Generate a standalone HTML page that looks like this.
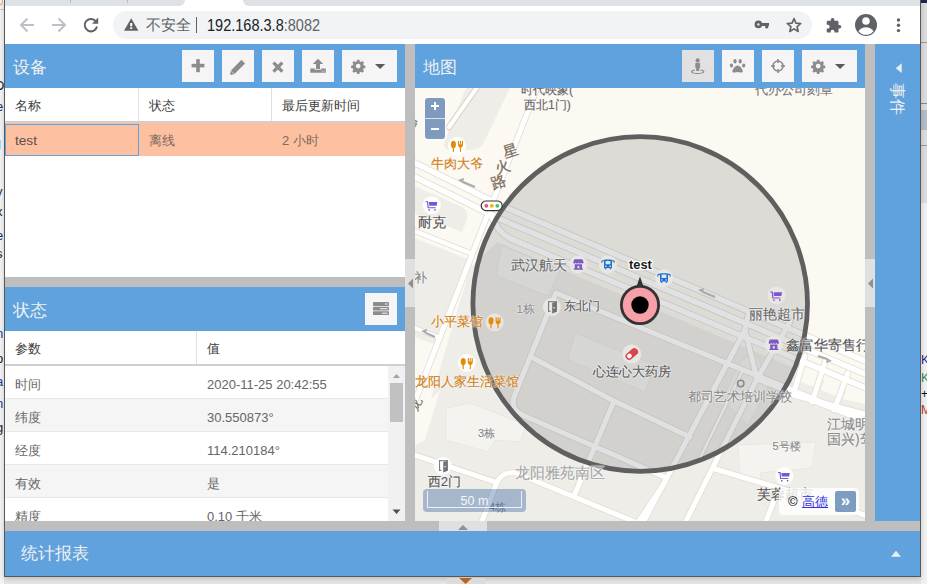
<!DOCTYPE html>
<html><head><meta charset="utf-8">
<style>
*{box-sizing:border-box;margin:0;padding:0}
html,body{width:927px;height:584px;overflow:hidden;background:#e9e9e9;font-family:"Liberation Sans",sans-serif;position:relative}
.a{position:absolute}
.hdr{position:absolute;background:#5fa2dd;height:44px;color:#f0f0f0;font-size:16px}
.hdr .t{position:absolute;left:8px;top:14.5px;line-height:18px;font-size:16.6px}
.btn{position:absolute;top:6px;width:32px;height:32px;background:#f5f5f5}
.btn.pressed{background:#e1e1e1}
.gh{position:absolute;height:35px;background:#fff;border-bottom:2px solid #cfcfcf;font-size:13px;color:#404040}
.gh div{position:absolute;top:0;height:33px;line-height:35.5px;padding-left:10px;border-right:1px solid #e1e1e1}
.row{position:absolute;height:33px;border-bottom:1px solid #e9e9e9;background:#fff;font-size:13px;color:#666}
.row div{position:absolute;top:1.5px;line-height:33px;padding-left:10px}
.alt{background:#f5f5f5}
</style></head><body>
<!-- desktop -->
<div class="a" style="left:0;top:0;width:927px;height:584px;background:#e6e6e6"></div>





<!-- window frame -->
<div class="a" style="left:0;top:0;width:4px;height:584px;background:#f3f3f3;overflow:hidden">
<div class="a" style="left:-4px;top:9px;width:8px;height:1px;background:#c8c8c8"></div>
<div class="a" style="left:-6px;top:-3px;width:9px;height:9px;border-radius:50%;border:1.5px solid #e0a050"></div>
<div class="a" style="left:-5px;top:79px;font-size:13px;line-height:13px;color:#111">D</div>
<div class="a" style="left:-4px;top:100px;font-size:13px;line-height:13px;color:#1a2a60">e</div>
<div class="a" style="left:-2px;top:138px;font-size:13px;line-height:13px;color:#222">l</div>
<div class="a" style="left:-4px;top:185px;font-size:13px;line-height:13px;color:#1a2a60">v</div>
<div class="a" style="left:-4px;top:205px;font-size:13px;line-height:13px;color:#222">x</div>
<div class="a" style="left:-4px;top:229px;font-size:13px;line-height:13px;color:#1a2a60">e</div>
<div class="a" style="left:-4px;top:247px;font-size:13px;line-height:13px;color:#222">s</div>
<div class="a" style="left:-4px;top:327px;font-size:13px;line-height:13px;color:#1a40a0">n</div>
<div class="a" style="left:-4px;top:352px;font-size:13px;line-height:13px;color:#222">o</div>
<div class="a" style="left:-4px;top:375px;font-size:13px;line-height:13px;color:#1a40a0">a</div>
<div class="a" style="left:-4px;top:397px;font-size:13px;line-height:13px;color:#1a40a0">n</div>
<div class="a" style="left:-4px;top:421px;font-size:13px;line-height:13px;color:#222">g</div>
</div>
<div class="a" style="left:921px;top:0;width:6px;height:584px;background:#f0f0f0;overflow:hidden">
<div class="a" style="left:0;top:0;width:6px;height:3px;background:#1b2a4a"></div>
<div class="a" style="left:0;top:3px;width:6px;height:200px;background:#dcdcdc"></div>
<div class="a" style="left:0;top:42px;width:6px;height:1px;background:#999"></div>
<div class="a" style="left:0;top:103px;width:6px;height:1px;background:#888"></div>
<div class="a" style="left:0;top:110px;width:6px;height:20px;background:#b4bcc8"></div>
<div class="a" style="left:0;top:145px;width:6px;height:1px;background:#999"></div>
<div class="a" style="left:0;top:354px;font-size:12px;line-height:12px;color:#1a2a90">K</div>
<div class="a" style="left:0;top:372px;font-size:12px;line-height:12px;color:#2a8a5a">K</div>
<div class="a" style="left:0;top:388px;font-size:12px;line-height:12px;color:#111">+</div>
<div class="a" style="left:0;top:404px;font-size:12px;line-height:12px;color:#c03030">M</div>

</div>
<div class="a" style="left:4px;top:0;width:917px;height:577px;background:#bebebe;border:1px solid #585858;border-top:none;box-shadow:0 2px 5px rgba(0,0,0,.18)"></div>
<!-- tab strip -->
<div class="a" style="left:5px;top:0;width:915px;height:7px;background:#fff"></div>
<div class="a" style="left:5px;top:0;width:180px;height:6px;background:#dee1e6;border-bottom-right-radius:6px"></div>
<div class="a" style="left:243px;top:0;width:677px;height:6px;background:#dee1e6;border-bottom-left-radius:6px"></div>
<div class="a" style="left:70px;top:0;width:1px;height:3px;background:#b9bcc1"></div>
<div class="a" style="left:127px;top:0;width:1px;height:3px;background:#b9bcc1"></div>
<!-- toolbar -->
<div class="a" style="left:5px;top:6px;width:915px;height:38px;background:#fff"></div>
<div class="a" style="left:113px;top:11px;width:699px;height:28px;border-radius:14px;background:#f1f3f4"></div>
<svg class="a" style="left:0;top:0" width="927" height="44" viewBox="0 0 927 44">
  <!-- back -->
  <path d="M34 25H21.5M27.5 18.5L21 25l6.5 6.5" fill="none" stroke="#bdc1c6" stroke-width="2"/>
  <!-- forward -->
  <path d="M52 25h12.5M58.5 18.5L65 25l-6.5 6.5" fill="none" stroke="#bdc1c6" stroke-width="2"/>
  <!-- reload -->
  <path d="M96.2 21.8A6.2 6.2 0 1 0 97 26.6" fill="none" stroke="#5f6368" stroke-width="2"/>
  <path d="M98.2 17.6v6.2H92z" fill="#5f6368"/>
  <!-- warning -->
  <path d="M131.2 18.3L138.4 30.8H124z" fill="#5f6368"/>
  <rect x="130.2" y="23" width="2" height="3.3" fill="#fff"/>
  <rect x="130.2" y="27.3" width="2" height="1.7" fill="#fff"/>
  <!-- separator -->
  <rect x="196" y="17" width="1" height="16" fill="#5f6368"/>
  <!-- key -->
  <circle cx="758.4" cy="24.4" r="2.5" fill="none" stroke="#5f6368" stroke-width="2.6"/>
  <path d="M760.5 23h8.5v2.9h-.8v2.4h-3v-2.4h-4.7z" fill="#5f6368"/>
  <!-- star -->
  <path d="M794 18.6l1.9 4.5 4.9.4-3.7 3.2 1.1 4.8-4.2-2.6-4.2 2.6 1.1-4.8-3.7-3.2 4.9-.4z" fill="none" stroke="#5f6368" stroke-width="1.6" stroke-linejoin="round"/>
  <!-- puzzle -->
  <path transform="translate(825.3 17.3) scale(.695)" d="M20.5 11H19V7c0-1.1-.9-2-2-2h-4V3.5C13 2.12 11.88 1 10.5 1S8 2.12 8 3.5V5H4c-1.1 0-1.99.9-1.99 2v3.8H3.5c1.49 0 2.7 1.21 2.7 2.7s-1.21 2.7-2.7 2.7H2V20c0 1.1.9 2 2 2h3.8v-1.5c0-1.49 1.21-2.7 2.7-2.7 1.490 0 2.7 1.21 2.7 2.7V22H17c1.1 0 2-.9 2-2v-4h1.5c1.38 0 2.5-1.12 2.5-2.5S21.88 11 20.5 11z" fill="#5f6368"/>
  <!-- avatar -->
  <circle cx="866" cy="25" r="11" fill="#5f6368"/>
  <circle cx="866" cy="21" r="3.8" fill="#fff"/>
  <path d="M858.5 31.2c1.6-2.6 4.6-4 7.5-4s5.9 1.4 7.5 4A9.5 9.5 0 0 1 858.5 31.2z" fill="#fff"/>
  <!-- dots -->
  <circle cx="898.5" cy="20" r="1.7" fill="#5f6368"/>
  <circle cx="898.5" cy="25.3" r="1.7" fill="#5f6368"/>
  <circle cx="898.5" cy="30.6" r="1.7" fill="#5f6368"/>
</svg>
<div class="a" style="left:146px;top:16px;font-size:15px;line-height:18px;color:#5f6368">不安全</div>
<div class="a" style="left:206.5px;top:16px;font-size:16.5px;line-height:18px;color:#202124;transform:scaleX(.88);transform-origin:0 0">192.168.3.8<span style="color:#5f6368">:8082</span></div>
<svg class="a" style="left:415px;top:88px" width="450" height="433" viewBox="415 88 450 433"><defs><clipPath id="mc"><rect x="415" y="88" width="450" height="433"/></clipPath></defs><g clip-path="url(#mc)">
<rect x="415" y="88" width="450" height="433" fill="#fcf9f2"/>
<g fill="#efede8"><path d="M415 186 L462 207 Q470 212 466 222 L462 232 L415 214Z"/><path d="M415 238 L470 260 L448 318 L436 345 L415 337Z"/><path d="M497 242 L865 398 L865 521 L415 521 L415 448 L430 402 L470 268Z"/><path d="M466 88 L510 88 L484 142 Q480 150 470 150 L452 150 Q440 150 446 138Z"/></g>
<g fill="#fcf9f2"><path d="M806 358 L824 366 L816 388 L798 381Z"/><path d="M829 368 L846 375 L838 397 L821 390Z"/><path d="M851 378 L865 384 L865 404 L843 399Z"/><path d="M415 415 L440 390 L425 440 L415 445Z"/></g>
<g fill="#f4f3ef" stroke="#e8e5df" stroke-width=".8"><path d="M446 408 L470 403 L527 425 L520 442 L495 440 L488 452 L446 440Z"/><path d="M738 445 L816 442 L812 468 L760 473 L762 484 L740 480Z"/><path d="M502 245 L560 270 L548 296 L496 276Z"/><path d="M575 333 L655 365 L645 392 L568 360Z"/><path d="M722 400 L738 366 Q746 352 758 358 L770 384 L748 425Z"/></g>
<g fill="none" stroke-linecap="round" stroke-linejoin="round">
<path d="M537 88L415 401" stroke="#e3ddd2" stroke-width="6.6"/><path d="M415 163L500 205L865 361" stroke="#e3ddd2" stroke-width="7.1"/><path d="M415 177L500 219L865 374" stroke="#e3ddd2" stroke-width="7.1"/><path d="M491 214Q497 233 512 239.4L865 387.7" stroke="#e3ddd2" stroke-width="7.1"/><path d="M415 231L470 253" stroke="#e3ddd2" stroke-width="6.1"/><path d="M556 293L865 420" stroke="#e3ddd2" stroke-width="6.6"/><path d="M556 293L514 397Q510 410 524 415.7L652 471.5L667 478" stroke="#e3ddd2" stroke-width="6.6"/><path d="M533 358L612 400L690 437" stroke="#e3ddd2" stroke-width="6.6"/><path d="M614 401L574 496" stroke="#e3ddd2" stroke-width="6.6"/><path d="M415 455L495 482" stroke="#e3ddd2" stroke-width="6.6"/><path d="M482 521L497 482Q503 471 516 473L640 524" stroke="#e3ddd2" stroke-width="6.6"/><path d="M665 482L639 521" stroke="#e3ddd2" stroke-width="6.6"/><path d="M745 330L644 521" stroke="#e3ddd2" stroke-width="6.6"/><path d="M757 379L686 521" stroke="#e3ddd2" stroke-width="6.6"/><path d="M742 372L700 458" stroke="#e3ddd2" stroke-width="4.1"/><path d="M745 330L757 379L865 421" stroke="#e3ddd2" stroke-width="6.6"/><path d="M757 379L790 322" stroke="#e3ddd2" stroke-width="6.6"/><path d="M805 356L793 395L865 414" stroke="#e3ddd2" stroke-width="6.6"/><path d="M825.5 361L812 402" stroke="#e3ddd2" stroke-width="6.6"/><path d="M848 373L834 410" stroke="#e3ddd2" stroke-width="6.6"/><path d="M715 469L779 488L865 515" stroke="#e3ddd2" stroke-width="6.6"/><path d="M766 521L777 493" stroke="#e3ddd2" stroke-width="6.6"/><path d="M415 328L440 338" stroke="#e3ddd2" stroke-width="5.6"/><path d="M745 330L748 315" stroke="#e3ddd2" stroke-width="6.6"/>
<path d="M537 88L415 401" stroke="#ffffff" stroke-width="5"/><path d="M415 163L500 205L865 361" stroke="#ffffff" stroke-width="5.5"/><path d="M415 177L500 219L865 374" stroke="#ffffff" stroke-width="5.5"/><path d="M491 214Q497 233 512 239.4L865 387.7" stroke="#ffffff" stroke-width="5.5"/><path d="M415 231L470 253" stroke="#ffffff" stroke-width="4.5"/><path d="M556 293L865 420" stroke="#ffffff" stroke-width="5"/><path d="M556 293L514 397Q510 410 524 415.7L652 471.5L667 478" stroke="#ffffff" stroke-width="5"/><path d="M533 358L612 400L690 437" stroke="#ffffff" stroke-width="5"/><path d="M614 401L574 496" stroke="#ffffff" stroke-width="5"/><path d="M415 455L495 482" stroke="#ffffff" stroke-width="5"/><path d="M482 521L497 482Q503 471 516 473L640 524" stroke="#ffffff" stroke-width="5"/><path d="M665 482L639 521" stroke="#ffffff" stroke-width="5"/><path d="M745 330L644 521" stroke="#ffffff" stroke-width="5"/><path d="M757 379L686 521" stroke="#ffffff" stroke-width="5"/><path d="M742 372L700 458" stroke="#ffffff" stroke-width="2.5"/><path d="M745 330L757 379L865 421" stroke="#ffffff" stroke-width="5"/><path d="M757 379L790 322" stroke="#ffffff" stroke-width="5"/><path d="M805 356L793 395L865 414" stroke="#ffffff" stroke-width="5"/><path d="M825.5 361L812 402" stroke="#ffffff" stroke-width="5"/><path d="M848 373L834 410" stroke="#ffffff" stroke-width="5"/><path d="M715 469L779 488L865 515" stroke="#ffffff" stroke-width="5"/><path d="M766 521L777 493" stroke="#ffffff" stroke-width="5"/><path d="M415 328L440 338" stroke="#ffffff" stroke-width="4"/><path d="M745 330L748 315" stroke="#ffffff" stroke-width="5"/>
<path d="M478 86L449 127" stroke="#ddd6ca" stroke-width="6.5" stroke-linecap="round" stroke-dasharray="5 3"/><path d="M478 86L449 127" stroke="#fff" stroke-width="4" stroke-linecap="round"/>
</g>
<circle cx="640.2" cy="304" r="167.3" fill="rgba(25,30,40,0.135)" stroke="#5f5f5f" stroke-width="4.8"/>
<!-- POI icons -->
<g id="pois">
  <!-- restaurant icons -->
  <g transform="translate(457 145.8)"><circle r="9" fill="#fff" fill-opacity=".85"/><g fill="#e38b06"><ellipse cx="-3.6" cy="-1.4" rx="2.5" ry="3.6"/><rect x="-4.2" y="1.5" width="1.2" height="4.6"/><rect x="1" y="-4.9" width="1.1" height="3.8"/><rect x="2.95" y="-4.9" width="1.1" height="3.8"/><rect x="4.9" y="-4.9" width="1.1" height="3.8"/><path d="M1-1.6h5c0 2.2-.9 3.3-2.5 3.5-1.6-.2-2.5-1.3-2.5-3.5z"/><rect x="2.95" y="1.5" width="1.1" height="4.6"/></g></g>
  <g transform="translate(494.6 322.3)"><circle r="9" fill="#e8e5e0"/><g fill="#e38b06"><ellipse cx="-3.6" cy="-1.4" rx="2.5" ry="3.6"/><rect x="-4.2" y="1.5" width="1.2" height="4.6"/><rect x="1" y="-4.9" width="1.1" height="3.8"/><rect x="2.95" y="-4.9" width="1.1" height="3.8"/><rect x="4.9" y="-4.9" width="1.1" height="3.8"/><path d="M1-1.6h5c0 2.2-.9 3.3-2.5 3.5-1.6-.2-2.5-1.3-2.5-3.5z"/><rect x="2.95" y="1.5" width="1.1" height="4.6"/></g></g>
  <g transform="translate(466.8 363)"><circle r="9" fill="#fff" fill-opacity=".85"/><g fill="#e38b06"><ellipse cx="-3.6" cy="-1.4" rx="2.5" ry="3.6"/><rect x="-4.2" y="1.5" width="1.2" height="4.6"/><rect x="1" y="-4.9" width="1.1" height="3.8"/><rect x="2.95" y="-4.9" width="1.1" height="3.8"/><rect x="4.9" y="-4.9" width="1.1" height="3.8"/><path d="M1-1.6h5c0 2.2-.9 3.3-2.5 3.5-1.6-.2-2.5-1.3-2.5-3.5z"/><rect x="2.95" y="1.5" width="1.1" height="4.6"/></g></g>
  <!-- cart icons -->
  <g transform="translate(431.8 205.2)"><circle r="9" fill="#fff" fill-opacity=".9"/><g fill="#7b55d3"><path d="M-6.3-4h2.6l.5 6h7.1v1.1h-8.1l-.6-6h-1.5z"/><path d="M-2.9-3.1h8.4l-.7 3.6h-7.4z"/><rect x="-3.3" y="4" width="1.5" height="1.5"/><rect x="2.5" y="4" width="1.5" height="1.5"/></g></g>
  <g transform="translate(776.5 295.4)"><circle r="9" fill="#e8e7e4"/><g fill="#7b55d3"><path d="M-6.3-4h2.6l.5 6h7.1v1.1h-8.1l-.6-6h-1.5z"/><path d="M-2.9-3.1h8.4l-.7 3.6h-7.4z"/><rect x="-3.3" y="4" width="1.5" height="1.5"/><rect x="2.5" y="4" width="1.5" height="1.5"/></g></g>
  <g transform="translate(784.3 476)"><circle r="9" fill="#fff" fill-opacity=".9"/><g fill="#7b55d3"><path d="M-6.3-4h2.6l.5 6h7.1v1.1h-8.1l-.6-6h-1.5z"/><path d="M-2.9-3.1h8.4l-.7 3.6h-7.4z"/><rect x="-3.3" y="4" width="1.5" height="1.5"/><rect x="2.5" y="4" width="1.5" height="1.5"/></g></g>
  <!-- store icons -->
  <g transform="translate(578.4 264.4)"><circle r="9" fill="#e8e7e4"/><g fill="#7b5cc4"><path d="M-4-5.2h8l1.2 3c0 .9-.6 1.4-1.3 1.4s-1.2-.5-1.3-1.2c-.1.7-.6 1.2-1.3 1.2s-1.2-.5-1.3-1.2c-.1.7-.6 1.2-1.3 1.2s-1.2-.5-1.3-1.2c-.1.7-.6 1.2-1.3 1.2s-1.3-.5-1.3-1.4z"/><path d="M-3.6-.2h7.2v4.4h1v1.2h-9.2v-1.2h1zM-1 1.6v2.2h2v-2.2z" fill-rule="evenodd"/></g></g>
  <g transform="translate(773.8 344.7)"><circle r="9" fill="#e8e7e4"/><g fill="#7b5cc4"><path d="M-4-5.2h8l1.2 3c0 .9-.6 1.4-1.3 1.4s-1.2-.5-1.3-1.2c-.1.7-.6 1.2-1.3 1.2s-1.2-.5-1.3-1.2c-.1.7-.6 1.2-1.3 1.2s-1.2-.5-1.3-1.2c-.1.7-.6 1.2-1.3 1.2s-1.3-.5-1.3-1.4z"/><path d="M-3.6-.2h7.2v4.4h1v1.2h-9.2v-1.2h1zM-1 1.6v2.2h2v-2.2z" fill-rule="evenodd"/></g></g>
  <!-- bus icons -->
  <g transform="translate(608 264.4)"><circle r="9" fill="#e8e7e4"/><g fill="#1a72d2"><path d="M-2.8-4.8h5.6c.7 0 1.2.5 1.2 1.2v7.2h-.8v1.2h-1.6v-1.2h-3.2v1.2h-1.6v-1.2h-.8v-7.2c0-.7.5-1.2 1.2-1.2zM-2.4-3.5v3.4h4.8v-3.4zM-2.2 1.2a.7.7 0 1 0 .01 0zM2.2 1.2a.7.7 0 1 0 .01 0z" fill-rule="evenodd"/></g><path d="M-4-3.6h-1.3c-.5 0-.8.3-.8.8v1.2M4-3.6h1.3c.5 0 .8.3.8.8v1.2" fill="none" stroke="#1a72d2" stroke-width="1.1"/></g>
  <g transform="translate(664 278)"><circle r="9" fill="#e8e7e4"/><g fill="#1a72d2"><path d="M-2.8-4.8h5.6c.7 0 1.2.5 1.2 1.2v7.2h-.8v1.2h-1.6v-1.2h-3.2v1.2h-1.6v-1.2h-.8v-7.2c0-.7.5-1.2 1.2-1.2zM-2.4-3.5v3.4h4.8v-3.4zM-2.2 1.2a.7.7 0 1 0 .01 0zM2.2 1.2a.7.7 0 1 0 .01 0z" fill-rule="evenodd"/></g><path d="M-4-3.6h-1.3c-.5 0-.8.3-.8.8v1.2M4-3.6h1.3c.5 0 .8.3.8.8v1.2" fill="none" stroke="#1a72d2" stroke-width="1.1"/></g>
  <!-- door icons -->
  <g transform="translate(551.8 307)"><circle r="9" fill="#e8e7e4"/><g fill="#707274"><rect x="-3.7" y="-5.8" width="8.6" height="1"/><rect x="-3.7" y="-5.8" width="1" height="10.5"/><rect x="-3.7" y="3.8" width="2.4" height="1"/><rect x="3.9" y="-5.8" width="1" height="10.5"/><path d="M.4-4.3L4.9-5.1V4.8L.4 6.6z"/></g><rect x="1.6" y="0" width="1.4" height="1.4" fill="#e8e7e4"/></g>
  <g transform="translate(442.8 466)"><circle r="9" fill="#fff" fill-opacity=".9"/><g fill="#707274"><rect x="-3.7" y="-5.8" width="8.6" height="1"/><rect x="-3.7" y="-5.8" width="1" height="10.5"/><rect x="-3.7" y="3.8" width="2.4" height="1"/><rect x="3.9" y="-5.8" width="1" height="10.5"/><path d="M.4-4.3L4.9-5.1V4.8L.4 6.6z"/></g><rect x="1.6" y="0" width="1.4" height="1.4" fill="#e8e7e4"/></g>
  <!-- pill -->
  <g transform="translate(631.8 354)"><circle r="9.5" fill="#e8e7e4"/><g transform="rotate(-40)"><rect x="-7" y="-3.6" width="14" height="7.2" rx="3.6" fill="#d9434b"/><rect x="-5.6" y="-2.2" width="5" height="4.4" rx="2.2" fill="#fff"/></g></g>
  <!-- school ring -->
  <circle cx="740.7" cy="383.5" r="3.2" fill="none" stroke="#8a8a8a" stroke-width="1.6"/>
  <!-- one-way arrows -->
  <g stroke="#aaa" stroke-width="2" fill="#aaa">
    <path d="M463 182l12 5" /><path d="M458 180l6-2-1 5z" stroke="none"/>
    <path d="M703 292l12 5" /><path d="M698 290l6-2-1 5z" stroke="none"/>
    <path d="M426 333l9 4" /><path d="M421 331l6-2-1 5z" stroke="none"/>
    <path d="M818 356l9 3" /><path d="M832 361l-6 2 1-5z" stroke="none"/>
  </g>
  <!-- traffic light -->
  <rect x="481.2" y="201" width="21" height="9.6" rx="4.8" fill="#fff" stroke="#333" stroke-width="1.2"/>
  <circle cx="486.3" cy="205.8" r="1.9" fill="#f0506e"/>
  <circle cx="491.8" cy="205.8" r="1.9" fill="#f5b200"/>
  <circle cx="497.3" cy="205.8" r="1.9" fill="#3cc85a"/>
</g>
<!-- marker -->
<g>
  <path d="M640 276.5l3.5 10h-7z" fill="#333"/>
  <circle cx="640" cy="305" r="18.6" fill="#f8a0a8" stroke="#333" stroke-width="2.8"/>
  <circle cx="640" cy="305" r="8.7" fill="#000"/>
</g>
</g>
</svg>
<style>.ml{position:absolute;white-space:nowrap;-webkit-text-stroke:.15px currentColor;text-shadow:0 0 1.5px #fff,0 0 1.5px #fff,0 0 2px rgba(255,255,255,.8)}</style>
<div class="a" style="left:415px;top:88px;width:450px;height:433px;overflow:hidden"><div class="a" style="left:-415px;top:-88px;width:927px;height:584px">
<div class="ml" style="left:521.0px;top:84.4px;font-size:12.4px;line-height:12.4px;color:#666;">时代映象(</div>
<div class="ml" style="left:524.0px;top:99.0px;font-size:12.2px;line-height:12.2px;color:#666;">西北1门)</div>
<div class="ml" style="left:754.5px;top:83.3px;font-size:13px;line-height:13px;color:#777;">代办公司刻章</div>
<div class="ml" style="left:431.0px;top:157.3px;font-size:13.3px;line-height:13.3px;color:#cf7d14;">牛肉大爷</div>
<div class="ml" style="left:418.0px;top:215.3px;font-size:14.4px;line-height:14.4px;color:#555;">耐克</div>
<div class="ml" style="left:414.0px;top:271.4px;font-size:13px;line-height:13px;color:#888;">补</div>
<div class="ml" style="left:510.8px;top:258.1px;font-size:14.4px;line-height:14.4px;color:#666;">武汉航天</div>
<div class="ml" style="left:516.5px;top:303.4px;font-size:11.6px;line-height:11.6px;color:#8a8a8a;">1栋</div>
<div class="ml" style="left:564.0px;top:299.9px;font-size:12px;line-height:12px;color:#555;">东北门</div>
<div class="ml" style="left:430.5px;top:315.4px;font-size:13.2px;line-height:13.2px;color:#cf7d14;">小平菜馆</div>
<div class="ml" style="left:415.0px;top:374.6px;font-size:13.2px;line-height:13.2px;color:#cf7d14;">龙阳人家生活菜馆</div>
<div class="ml" style="left:592.6px;top:365.3px;font-size:13.4px;line-height:13.4px;color:#555;">心连心大药房</div>
<div class="ml" style="left:749.1px;top:307.0px;font-size:14.3px;line-height:14.3px;color:#666;">丽艳超市</div>
<div class="ml" style="left:786.0px;top:337.9px;font-size:14.3px;line-height:14.3px;color:#555;">鑫富华寄售行</div>
<div class="ml" style="left:688.0px;top:390.2px;font-size:13.4px;line-height:13.4px;color:#888;">都司艺术培训学校</div>
<div class="ml" style="left:826.9px;top:417.2px;font-size:14px;line-height:14px;color:#888;">江城明</div>
<div class="ml" style="left:826.9px;top:432.0px;font-size:14px;line-height:14px;color:#888;">国兴)驾</div>
<div class="ml" style="left:477.9px;top:427.9px;font-size:11px;line-height:11px;color:#8a8a8a;">3栋</div>
<div class="ml" style="left:772.5px;top:440.9px;font-size:11px;line-height:11px;color:#8a8a8a;">5号楼</div>
<div class="ml" style="left:428.0px;top:476.4px;font-size:12.5px;line-height:12.5px;color:#555;">西2门</div>
<div class="ml" style="left:514.9px;top:465.2px;font-size:15px;line-height:15px;color:#a5a5a5;">龙阳雅苑南区</div>
<div class="ml" style="left:756.6px;top:487.3px;font-size:14px;line-height:14px;color:#555;">芙蓉超市</div>
<div class="ml" style="left:489.0px;top:501.9px;font-size:11px;line-height:11px;color:#8a8a8a;">4栋</div>
<div class="ml" style="left:502.7px;top:142.8px;font-size:15px;line-height:15px;color:#7d6d5c;-webkit-text-stroke:.3px #7d6d5c;transform:rotate(-18deg)">星</div>
<div class="ml" style="left:495.3px;top:159.4px;font-size:15px;line-height:15px;color:#7d6d5c;-webkit-text-stroke:.3px #7d6d5c;transform:rotate(-18deg)">火</div>
<div class="ml" style="left:491.0px;top:173.8px;font-size:15px;line-height:15px;color:#7d6d5c;-webkit-text-stroke:.3px #7d6d5c;transform:rotate(-18deg)">路</div>
<div class="ml" style="left:406.5px;top:117.5px;font-size:11px;line-height:11px;color:#777;transform:rotate(80deg)">象</div>
<div class="ml" style="left:409px;top:398px;font-size:13px;line-height:13px;color:#7a6e62;transform:rotate(-68deg)">龙</div>
</div></div>
<div class="a" style="left:629px;top:257.5px;font-size:12.8px;line-height:13px;font-weight:bold;color:#1a1a1a;text-shadow:-1px 0 #fff,1px 0 #fff,0 -1px #fff,0 1px #fff,-1px -1px #fff,1px 1px #fff,-1px 1px #fff,1px -1px #fff">test</div>
<!-- zoom control -->
<div class="a" style="left:423px;top:96px;width:24px;height:45px;background:rgba(255,255,255,.4);border-radius:4px"></div><div class="a" style="left:425px;top:98px;width:20px;height:41px;background:rgba(0,60,136,.5);border-radius:3px"></div>
<div class="a" style="left:425px;top:118px;width:20px;height:1px;background:#dfe4ea"></div>
<div class="a" style="left:431px;top:104.8px;width:8px;height:2.5px;background:#fff"></div><div class="a" style="left:433.8px;top:102px;width:2.5px;height:8px;background:#fff"></div>
<div class="a" style="left:431px;top:128px;width:8px;height:2.2px;background:#fff"></div>
<!-- scale bar -->
<div class="a" style="left:423px;top:489px;width:103px;height:23px;background:rgba(0,60,136,.3);border-radius:4px"></div>
<div class="a" style="left:427px;top:491px;width:95px;height:17px;border:1px solid #eef;border-top:none"></div>
<div class="a" style="left:423px;top:492.5px;width:103px;text-align:center;font-size:12.5px;line-height:16px;color:#f4f6f8">50 m</div>
<!-- attribution -->
<div class="a" style="left:779px;top:488px;width:80px;height:27px;background:rgba(255,255,255,.8);border-radius:4px"></div>
<div class="a" style="left:788px;top:494px;font-size:13px;line-height:16px;color:#000">©<span style="display:inline-block;width:4.5px"></span><span style="color:#3434e0;text-decoration:underline">高德</span></div>
<div class="a" style="left:835px;top:491px;width:21px;height:21px;background:rgba(0,60,136,.5);border-radius:2px;color:#fff;font-size:17px;line-height:19px;text-align:center;font-weight:bold">»</div>
<!-- device panel -->
<div class="a" style="left:5px;top:44px;width:400px;height:233px;background:#fff"></div>
<div class="hdr" style="left:5px;top:44px;width:400px"><span class="t">设备</span>
  <div class="btn" style="left:177px"></div>
  <div class="btn" style="left:217px"></div>
  <div class="btn" style="left:257px"></div>
  <div class="btn" style="left:297px"></div>
  <div class="btn" style="left:337px;width:55px"></div>
</div>
<svg class="a" style="left:0;top:44px" width="405" height="44" viewBox="0 44 405 44">
  <g fill="#8c8c8c">
  <!-- plus -->
  <rect x="196.2" y="59.2" width="3.6" height="13" />
  <rect x="191.6" y="63.8" width="12.8" height="3.6" />
  <!-- pencil -->
  <path d="M241.5 59.8l3.6 3.6-10.6 10.6-3.6-3.6z"/>
  <path d="M230.6 70.7l3.6 3.6-4 .6z"/>
  <!-- x -->
  <path d="M272.3 63.8l2.3-2.3 3.3 3.3 3.3-3.3 2.3 2.3-3.3 3.3 3.3 3.3-2.3 2.3-3.3-3.3-3.3 3.3-2.3-2.3 3.3-3.3z"/>
  <!-- upload -->
  <path d="M318 58.8l5.2 5.2h-3.2v5h-4v-5h-3.2z"/>
  <path d="M310.3 68.5h4.5v1.2h6.4v-1.2h4.6v4.3h-15.5z"/>
  <!-- gear -->
  <g id="gear" transform="translate(358.2 66) scale(.9) translate(-358.2 -66)"><path d="M358.2 59l1.3.1.4 1.9 1.4.6 1.6-1.1 1.8 1.8-1.1 1.6.6 1.4 1.9.4v2.6l-1.9.4-.6 1.4 1.1 1.6-1.8 1.8-1.6-1.1-1.4.6-.4 1.9h-2.6l-.4-1.9-1.4-.6-1.6 1.1-1.8-1.8 1.1-1.6-.6-1.4-1.9-.4v-2.6l1.9-.4.6-1.4-1.1-1.6 1.8-1.8 1.6 1.1 1.4-.6.4-1.9zM358.2 63.4a2.6 2.6 0 1 0 .01 0z" fill-rule="evenodd"/></g>
  </g>
  <rect x="310.6" y="70.6" width="1" height="0" fill="#fff"/>
  <circle cx="322.2" cy="71" r=".6" fill="#f5f5f5"/>
  <circle cx="324" cy="71" r=".6" fill="#f5f5f5"/>
  <path d="M375 64h10.2l-5.1 5.1z" fill="#5a5a5a"/>
</svg>
<div class="gh" style="left:5px;top:88px;width:400px">
  <div style="left:0;width:134px">名称</div>
  <div style="left:134px;width:133px">状态</div>
  <div style="left:267px;width:133px;border-right:none">最后更新时间</div>
</div>
<div class="a" style="left:5px;top:123px;width:400px;height:33px;background:#fdc0a0;font-size:13px;color:#555"></div>
<div class="a" style="left:5px;top:124px;width:134px;height:32px;border:1px solid #5fa2dd"></div>
<div class="a" style="left:15px;top:133px;font-size:13.6px;line-height:16px;color:#5a4f48">test</div>
<div class="a" style="left:149px;top:132.5px;font-size:13px;line-height:16px;color:#7a6a60">离线</div>
<div class="a" style="left:282px;top:132.5px;font-size:13px;line-height:16px;color:#7a6a60">2 小时</div>

<!-- horizontal splitter left -->
<!-- state panel -->
<div class="a" style="left:5px;top:287px;width:400px;height:234px;background:#fff"></div>
<div class="hdr" style="left:5px;top:287px;width:400px"><span class="t">状态</span>
  <div class="btn" style="left:360px"></div>
</div>
<svg class="a" style="left:365px;top:293px" width="32" height="32" viewBox="365 293 32 32">
  <g fill="#8c8c8c">
  <rect x="373" y="302" width="16" height="4" rx=".8"/>
  <rect x="373" y="306.8" width="16" height="3.7" rx=".8"/>
  <rect x="373" y="311.3" width="16" height="3.7" rx=".8"/>
  </g>
  <g fill="#f5f5f5">
  <rect x="385" y="303.5" width="2.5" height="1"/>
  <rect x="380" y="308.2" width="7.5" height="1"/>
  <rect x="382" y="312.7" width="5.5" height="1"/>
  </g>
</svg>
<div class="gh" style="left:5px;top:331px;width:400px">
  <div style="left:0;width:192px">参数</div>
  <div style="left:192px;width:208px;border-right:none">值</div>
</div>
<div class="row" style="left:5px;top:366px;width:383px"><div>时间</div><div style="left:192px">2020-11-25 20:42:55</div></div>
<div class="row alt" style="left:5px;top:399px;width:383px"><div>纬度</div><div style="left:192px">30.550873°</div></div>
<div class="row" style="left:5px;top:432px;width:383px"><div>经度</div><div style="left:192px">114.210184°</div></div>
<div class="row alt" style="left:5px;top:465px;width:383px"><div>有效</div><div style="left:192px">是</div></div>
<div class="row" style="left:5px;top:498px;width:383px;height:23px;border-bottom:none;overflow:hidden"><div>精度</div><div style="left:192px">0.10 千米</div></div>
<!-- scrollbar -->
<div class="a" style="left:388px;top:366px;width:17px;height:155px;background:#f1f1f1"></div>
<div class="a" style="left:390px;top:383px;width:13px;height:39px;background:#c1c1c1"></div>
<svg class="a" style="left:388px;top:366px" width="17" height="155" viewBox="0 0 17 155">
  <path d="M5 12h7l-3.5-4z" fill="#a3a3a3"/>
  <path d="M4.5 143.5h8l-4 4.5z" fill="#505050"/>
</svg>

<!-- vertical splitter collapse tool -->
<div class="a" style="left:405px;top:259px;width:10px;height:48px;background:#e0e0e0"></div>
<svg class="a" style="left:405px;top:259px" width="10" height="48" viewBox="0 0 10 48"><path d="M8 19.5v10l-5-5z" fill="#8f8f8f"/></svg>
<!-- right splitter collapse tool -->
<div class="a" style="left:865px;top:259px;width:10px;height:48px;background:#e0e0e0"></div>
<svg class="a" style="left:865px;top:259px" width="10" height="48" viewBox="0 0 10 48"><path d="M8 19.5v10l-5-5z" fill="#8f8f8f"/></svg>
<!-- bottom splitter collapse tool -->
<div class="a" style="left:439px;top:521px;width:48px;height:10px;background:#e0e0e0"></div>
<svg class="a" style="left:439px;top:521px" width="48" height="10" viewBox="0 0 48 10"><path d="M19 9h10l-5-5z" fill="#8f8f8f"/></svg>

<!-- map header -->
<div class="hdr" style="left:415px;top:44px;width:450px"><span class="t">地图</span>
  <div class="btn pressed" style="left:267px"></div>
  <div class="btn" style="left:307px"></div>
  <div class="btn" style="left:347px"></div>
  <div class="btn" style="left:387px;width:55px"></div>
</div>
<svg class="a" style="left:415px;top:44px" width="450" height="44" viewBox="415 44 450 44">
  <g fill="#8c8c8c">
  <!-- street view -->
  <circle cx="697.7" cy="60.4" r="2.1"/>
  <rect x="695.3" y="62.7" width="4.8" height="5.6" rx="1"/>
  <rect x="696.2" y="66" width="3" height="5"/>
  <path d="M691 71.8c0-1.3 1.8-2 3.8-2.3v1c-1.5.3-2.3.8-2.3 1.3 0 .7 2.3 1.3 5.2 1.3s5.2-.6 5.2-1.3c0-.5-.8-1-2.3-1.3v-1c2 .3 3.8 1 3.8 2.3 0 1.3-3 2.2-6.7 2.2s-6.7-.9-6.7-2.2z"/>
  <!-- paw -->
  <ellipse cx="735" cy="61.2" rx="1.6" ry="2.2"/>
  <ellipse cx="740.2" cy="61.2" rx="1.6" ry="2.2"/>
  <ellipse cx="731.5" cy="65.5" rx="1.6" ry="2" transform="rotate(-25 731.5 65.5)"/>
  <ellipse cx="743.7" cy="65.5" rx="1.6" ry="2" transform="rotate(25 743.7 65.5)"/>
  <path d="M737.6 65.5c2.5 0 5.2 4 5.2 5.8 0 1.4-1.4 1.4-2.6 1.2-1-.2-1.7-.5-2.6-.5s-1.6.3-2.6.5c-1.2.2-2.6.2-2.6-1.2 0-1.8 2.7-5.8 5.2-5.8z"/>
  <!-- crosshairs -->
  <circle cx="778" cy="66" r="5" fill="none" stroke="#8c8c8c" stroke-width="1.6"/>
  <rect x="777.2" y="59" width="1.6" height="4"/>
  <rect x="777.2" y="69" width="1.6" height="4"/>
  <rect x="771" y="65.2" width="4" height="1.6"/>
  <rect x="781" y="65.2" width="4" height="1.6"/>
  <use href="#gear" transform="translate(460 0)"/>
  </g>
  <path d="M835 64h10.2l-5.1 5.1z" fill="#5a5a5a"/>
</svg>

<!-- events collapsed -->
<div class="a" style="left:875px;top:44px;width:45px;height:477px;background:#5fa2dd"></div>
<svg class="a" style="left:875px;top:44px" width="45" height="60" viewBox="875 44 45 60"><path d="M901.7 63.3v9.7l-6-4.85z" fill="#e8eef6"/></svg>
<div class="a" style="left:881px;top:88.5px;width:32px;height:20px;font-size:16px;line-height:20px;color:#f0f0f0;transform:rotate(90deg);transform-origin:center">事件</div>
<!-- reports collapsed -->
<div class="a" style="left:5px;top:531px;width:915px;height:45px;background:#5fa2dd"></div>
<div class="a" style="left:21px;top:545px;font-size:16.6px;line-height:18px;color:#f0f0f0">统计报表</div>
<svg class="a" style="left:885px;top:545px" width="20" height="16" viewBox="885 545 20 16"><path d="M891 556.8h10l-5-6z" fill="#e8eef6"/></svg>
<!-- below window bits -->
<div class="a" style="left:447px;top:578px;width:38px;height:6px;background:#dcdcdc"></div>
<svg class="a" style="left:455px;top:576px" width="22" height="8" viewBox="455 576 22 8"><path d="M459 578h13l-6.5 6z" fill="#b5651d"/></svg>

</body></html>
